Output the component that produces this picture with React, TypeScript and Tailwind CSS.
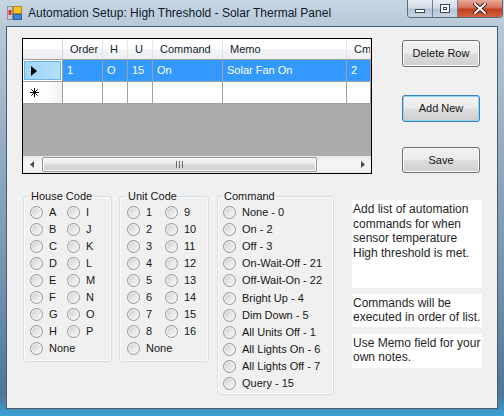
import React from 'react'

const ui = "font-['Liberation_Sans',Arial,sans-serif]"

const columns = [
  { name: 'Order', value: '1', width: 'w-[40px]' },
  { name: 'H', value: 'O', width: 'w-[25px]' },
  { name: 'U', value: '15', width: 'w-[25px]' },
  { name: 'Command', value: 'On', width: 'w-[70px]' },
  { name: 'Memo', value: 'Solar Fan On', width: 'w-[124px]' },
  { name: 'Cmd', value: '2', width: 'w-[24px]' },
]

const houseCodes = ['A', 'I', 'B', 'J', 'C', 'K', 'D', 'L', 'E', 'M', 'F', 'N', 'G', 'O', 'H', 'P']
const unitCodes = ['1', '9', '2', '10', '3', '11', '4', '12', '5', '13', '6', '14', '7', '15', '8', '16']
const commands = [
  'None - 0',
  'On - 2',
  'Off - 3',
  'On-Wait-Off - 21',
  'Off-Wait-On - 22',
  'Bright Up - 4',
  'Dim Down - 5',
  'All Units Off - 1',
  'All Lights On - 6',
  'All Lights Off - 7',
  'Query - 15',
]

function Radio({ label, tall }: { label: string; tall?: boolean }) {
  return (
    <div className={tall ? 'flex h-[17.2px] items-center' : 'flex h-[17px] items-center'}>
      <span className="h-[13px] w-[13px] shrink-0 rounded-full border border-[#979797] bg-[linear-gradient(135deg,#c9c9c9_0%,#e6e6e6_50%,#fbfbfb_100%)] shadow-[inset_0_0_0_1px_#f3f3f3]" />
      <span className="ml-[6.5px] whitespace-nowrap text-[11px] leading-[13px] text-[#161616]">{label}</span>
    </div>
  )
}

function WinButton({ label, focused, className }: { label: string; focused?: boolean; className: string }) {
  return (
    <button
      className={`${className} w-[78px] rounded-[3px] border text-[11px] text-[#141414] bg-[linear-gradient(180deg,#f2f2f2_0%,#ebebeb_48%,#dddddd_52%,#cfcfcf_100%)] ${
        focused ? 'border-[#3c7fb1] shadow-[inset_0_0_0_1px_#8fd6f7]' : 'border-[#707070] shadow-[inset_0_0_0_1px_#fbfbfb]'
      }`}
    >
      {label}
    </button>
  )
}

function DataGrid() {
  return (
    <div className="flex h-[136px] w-[350px] shrink-0 flex-col overflow-hidden border border-black bg-[#ababab]">
      {/* header */}
      <div className="flex h-[21px] shrink-0 border-b border-[#a0a0a0] bg-[linear-gradient(180deg,#ffffff_0%,#ffffff_50%,#f3f4f6_51%,#eceef1_100%)]">
        <div className="w-[40px] shrink-0 border-r border-[#d5d5d5]" />
        {columns.map((c) => (
          <div
            key={c.name}
            className={`${c.width} shrink-0 overflow-hidden whitespace-nowrap border-r border-[#e2e3e5] pl-[7px] text-[11px] leading-[20px] text-[#0f1d33]`}
          >
            {c.name}
          </div>
        ))}
      </div>
      {/* selected row */}
      <div className="flex h-[22px] shrink-0">
        <div className="flex w-[40px] shrink-0 items-center border-b border-r border-[#a0a0a0] bg-white p-[1px]">
          <div className="flex h-full w-full items-center border border-[#6db3e3] bg-[linear-gradient(90deg,#9dd4f5_0%,#b3dff8_100%)] pl-[6px]">
            <svg width="6" height="10" viewBox="0 0 6 10">
              <path d="M0 0 L6 5 L0 10 Z" fill="#000" />
            </svg>
          </div>
        </div>
        {columns.map((c) => (
          <div
            key={c.name}
            className={`${c.width} shrink-0 overflow-hidden whitespace-nowrap border-b border-r border-[#a0a0a0] bg-[#3399ff] pl-[4px] text-[11px] leading-[21px] text-white`}
          >
            {c.value}
          </div>
        ))}
      </div>
      {/* new row */}
      <div className="flex h-[22px] shrink-0">
        <div className="flex w-[40px] shrink-0 items-center border-b border-r border-[#a0a0a0] bg-[linear-gradient(90deg,#ffffff_0%,#ffffff_60%,#eef0f2_100%)] pl-[7px]">
          <svg width="9" height="9" viewBox="0 0 9 9" stroke="#000" strokeWidth="1">
            <path d="M4.5 0 V9 M0 4.5 H9 M1.3 1.3 L7.7 7.7 M7.7 1.3 L1.3 7.7" />
          </svg>
        </div>
        {columns.map((c) => (
          <div key={c.name} className={`${c.width} shrink-0 border-b border-r border-[#a0a0a0] bg-white`} />
        ))}
      </div>
      <div className="flex-1" />
      {/* horizontal scrollbar */}
      <div className="flex h-[17px] shrink-0 items-center bg-[linear-gradient(180deg,#e6e6e6_0%,#f4f4f4_30%,#f4f4f4_70%,#e8e8e8_100%)]">
        <div className="flex h-full w-[17px] shrink-0 items-center justify-center">
          <svg width="4" height="7" viewBox="0 0 4 7">
            <path d="M4 0 L0 3.5 L4 7 Z" fill="#4d4d4d" />
          </svg>
        </div>
        <div className="ml-[2px] flex h-[15px] w-[275px] items-center justify-center rounded-[2px] border border-[#979797] bg-[linear-gradient(180deg,#f6f6f6_0%,#eaeaea_45%,#d9d9d9_55%,#d2d2d2_100%)] shadow-[inset_0_0_0_1px_#fafafa]">
          <svg width="7" height="7" viewBox="0 0 7 7" stroke="#6b6b6b">
            <path d="M0.5 0 V7 M3.5 0 V7 M6.5 0 V7" />
          </svg>
        </div>
        <div className="flex-1" />
        <div className="flex h-full w-[17px] shrink-0 items-center justify-center">
          <svg width="4" height="7" viewBox="0 0 4 7">
            <path d="M0 0 L4 3.5 L0 7 Z" fill="#4d4d4d" />
          </svg>
        </div>
      </div>
    </div>
  )
}

function GroupBox({ title, className, children }: { title: string; className: string; children: React.ReactNode }) {
  return (
    <fieldset className={`${className} shrink-0 rounded-[3px] border border-[#d5dfe5] shadow-[inset_0_0_0_1px_#fbfbfb]`}>
      <legend className="px-[1.5px] text-[11px] leading-[12px] text-[#161616]">{title}</legend>
      {children}
    </fieldset>
  )
}

function TitleBar() {
  return (
    <div className="flex h-[27px] shrink-0 items-start">
      <div className="ml-[7px] mt-[5px] flex items-center">
        <svg width="16" height="16" viewBox="0 0 16 16">
          <rect x="0.5" y="1.5" width="5" height="13" fill="#c9ccd1" stroke="#8b9097" />
          <rect x="1.5" y="5" width="3" height="5" fill="#d8362b" />
          <rect x="6.5" y="1.5" width="8" height="7" fill="#f6c21c" stroke="#b58a10" />
          <rect x="6.5" y="9.5" width="8" height="5" fill="#3f87d8" stroke="#2b5f9d" />
        </svg>
        <span className="ml-[5px] text-[12px] leading-[16px] text-[#0c1a2b]">
          Automation Setup: High Threshold - Solar Thermal Panel
        </span>
      </div>
      <div className="ml-auto mr-[1px] flex h-[18px] overflow-hidden rounded-b-[4px] border border-t-0 border-[#5a6b7d]">
        <div className="flex w-[25px] items-center justify-center border-r border-[#6d7f91] bg-[linear-gradient(180deg,#e7eef5_0%,#d0dce8_45%,#b3c5d6_55%,#c7d6e3_100%)]">
          <div className="mt-[5px] h-[4px] w-[10px] border border-[#38495a] bg-white" />
        </div>
        <div className="flex w-[25px] items-center justify-center border-r border-[#6d7f91] bg-[linear-gradient(180deg,#e7eef5_0%,#d0dce8_45%,#b3c5d6_55%,#c7d6e3_100%)]">
          <div className="flex h-[9px] w-[10px] items-center justify-center border border-[#38495a] bg-white">
            <div className="h-[3px] w-[4px] border border-[#38495a]" />
          </div>
        </div>
        <div className="flex w-[44px] items-center justify-center bg-[linear-gradient(180deg,#e9a899_0%,#d97761_42%,#c4401f_55%,#d2613f_100%)]">
          <svg width="14" height="11" viewBox="0 0 14 11">
            <path d="M2 1 L12 10 M12 1 L2 10" stroke="#4a1a12" strokeWidth="4" strokeLinecap="round" />
            <path d="M2 1 L12 10 M12 1 L2 10" stroke="#ffffff" strokeWidth="2" strokeLinecap="round" />
          </svg>
        </div>
      </div>
    </div>
  )
}

export default function App() {
  return (
    <div
      className={`${ui} flex h-[416px] w-[504px] flex-col overflow-hidden bg-[linear-gradient(180deg,#c7d5e2_0%,#b7c8d8_7%,#94adc3_35%,#6f90ae_70%,#4d7699_95%,#3aa2d6_100%)]`}
    >
      <TitleBar />
      <div className="ml-[7px] h-[381px] w-[490px] shrink-0 bg-[#f0f0f0] shadow-[0_0_0_1px_#4a5c6e]">
        {/* grid and buttons */}
        <div className="ml-[15px] mt-[11px] flex">
          <DataGrid />
          <div className="ml-[30px] mt-[2px] flex flex-col">
            <WinButton label="Delete Row" className="h-[27px]" />
            <WinButton label="Add New" focused className="mt-[28px] h-[27px]" />
            <WinButton label="Save" className="mt-[25px] h-[26px]" />
          </div>
        </div>

        {/* option groups and notes */}
        <div className="ml-[16px] mt-[16px] flex items-start">
          <GroupBox title="House Code" className="h-[172px] w-[89px] pl-[5.5px] pt-[1.5px]">
            <div className="grid grid-cols-[37px_auto]">
              {houseCodes.map((h) => (
                <Radio key={h} label={h} />
              ))}
            </div>
            <Radio label="None" />
          </GroupBox>

          <GroupBox title="Unit Code" className="ml-[7px] h-[172px] w-[90px] pl-[6.5px] pt-[1.5px]">
            <div className="grid grid-cols-[38px_auto]">
              {unitCodes.map((u) => (
                <Radio key={u} label={u} />
              ))}
            </div>
            <Radio label="None" />
          </GroupBox>

          <GroupBox title="Command" className="ml-[8px] h-[205px] w-[117px] pl-[4.5px] pt-[1.5px]">
            {commands.map((c) => (
              <Radio key={c} label={c} tall />
            ))}
          </GroupBox>

          <div className="ml-[18px] mt-[10px] flex w-[130px] flex-col text-[12px] leading-[14.7px] text-[#1f1f1f]">
            <div className="h-[88px] whitespace-nowrap bg-white pl-[1px] pt-[2px]">
              Add list of automation
              <br />
              commands for when
              <br />
              sensor temperature
              <br />
              High threshold is met.
            </div>
            <div className="mt-[6px] h-[33px] whitespace-nowrap bg-white pl-[1px] pt-[1.5px]">
              Commands will be
              <br />
              executed in order of list.
            </div>
            <div className="mt-[7px] h-[34px] whitespace-nowrap bg-white pl-[1px] pt-[1.5px]">
              Use Memo field for your
              <br />
              own notes.
            </div>
          </div>
        </div>
      </div>
    </div>
  )
}
